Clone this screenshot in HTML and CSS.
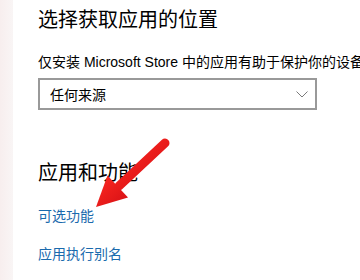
FILE: index.html
```html
<!DOCTYPE html>
<html lang="zh-CN">
<head>
<meta charset="utf-8">
<link rel="stylesheet" href="styles.css">
</head>
<body>
<div class="page">
  <div class="strip"></div>
  <main class="content">
    <h1 class="title">选择获取应用的位置</h1>
    <p class="desc">仅安装<span class="latin"> Microsoft Store </span>中的应用有助于保护你的设备</p>
    <div class="select">
      <span class="select-text">任何来源</span>
      <svg class="chev" width="12" height="7" viewBox="0 0 12 7"><path d="M0.5 0.5 L6 6 L11.5 0.5" fill="none" stroke="#7a7a7a" stroke-width="1"/></svg>
    </div>
    <h2 class="title section">应用和功能</h2>
    <a class="link first">可选功能</a>
    <a class="link">应用执行别名</a>
  </main>
  <svg class="arrow" width="360" height="280" viewBox="0 0 360 280">
    <defs>
      <linearGradient id="g" x1="0" y1="0" x2="1" y2="1">
        <stop offset="0" stop-color="#ff2a22"/>
        <stop offset="1" stop-color="#d40f14"/>
      </linearGradient>
    </defs>
    <line x1="165" y1="143" x2="119" y2="186" stroke="url(#g)" stroke-width="9" stroke-linecap="round"/>
    <polygon points="96,207 107.5,175.5 128,197.5" fill="url(#g)"/>
  </svg>
</div>
</body>
</html>
```
FILE: styles.css
```css
* { box-sizing: border-box; }
html, body { margin: 0; padding: 0; background: #fff; }
body {
  width: 360px;
  height: 280px;
  overflow: hidden;
  font-family: "Noto Sans CJK SC", sans-serif;
  color: #000;
}
.page {
  position: relative;
  display: flex;
  height: 280px;
}
.strip {
  width: 13px;
  flex: none;
  background: linear-gradient(to right, #f7eeee, #f9f5f5);
}
.content {
  flex: 1;
  padding-left: 25px;
  padding-top: 5px;
  display: flex;
  flex-direction: column;
  align-items: flex-start;
  white-space: nowrap;
}
.title {
  margin: 0;
  font-size: 20px;
  font-weight: 400;
  line-height: 28px;
}
.desc {
  margin: 18px 0 0;
  font-size: 14px;
  line-height: 20px;
}
.latin {
  font-family: "Liberation Sans", "Noto Sans CJK SC", sans-serif;
}
.select {
  margin-top: 6px;
  width: 279px;
  height: 32px;
  border: 2px solid #999;
  display: flex;
  align-items: center;
  justify-content: space-between;
  padding: 0 7px 0 10px;
}
.select-text {
  font-size: 14px;
  line-height: 20px;
}
.chev { display: block; }
.section { margin-top: 48px; }
.link {
  font-size: 14px;
  line-height: 20px;
  color: #1a6aad;
  margin-top: 18px;
}
.link.first { margin-top: 19px; }
.arrow {
  position: absolute;
  left: 0;
  top: 0;
  pointer-events: none;
}
```
